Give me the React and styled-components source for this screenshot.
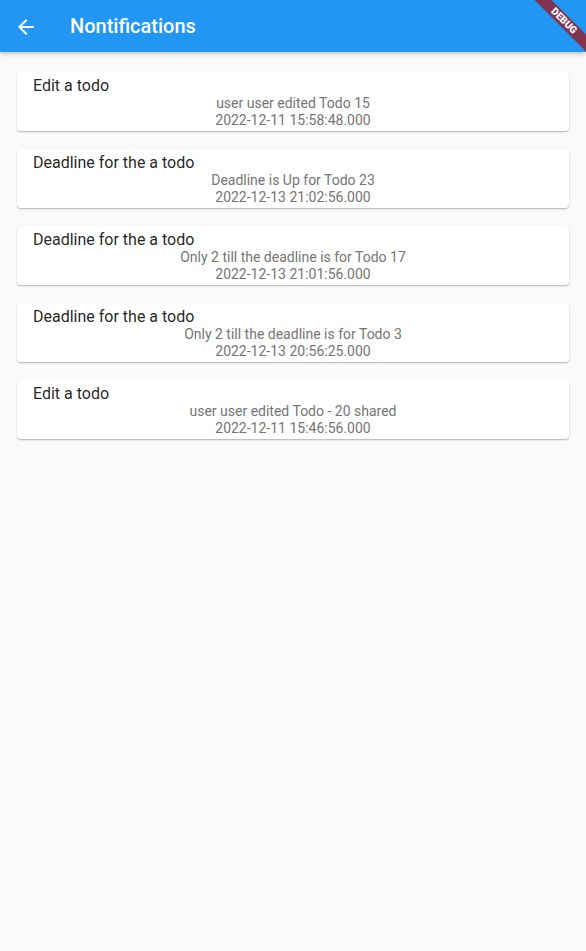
import React from 'react';
import styled, { createGlobalStyle } from 'styled-components';

const notifications = [
  { title: 'Edit a todo', body: 'user user edited Todo 15', date: '2022-12-11 15:58:48.000' },
  { title: 'Deadline for the a todo', body: 'Deadline is Up for Todo 23', date: '2022-12-13 21:02:56.000' },
  { title: 'Deadline for the a todo', body: 'Only 2 till the deadline is for Todo 17', date: '2022-12-13 21:01:56.000' },
  { title: 'Deadline for the a todo', body: 'Only 2 till the deadline is for Todo 3', date: '2022-12-13 20:56:25.000' },
  { title: 'Edit a todo', body: 'user user edited Todo - 20 shared', date: '2022-12-11 15:46:56.000' },
];

const GlobalStyle = createGlobalStyle`
  html, body {
    margin: 0;
    padding: 0;
    background: #fafafa;
    font-family: Roboto, "Liberation Sans", sans-serif;
  }
`;

const Screen = styled.div`
  position: relative;
  width: 586px;
  min-height: 951px;
  background: #fafafa;
  overflow: hidden;
`;

const AppBar = styled.header`
  height: 52px;
  background: #2196f3;
  display: flex;
  align-items: center;
  padding: 0 0 0 14px;
  box-shadow: 0 2px 4px rgba(0, 0, 0, 0.22);
  color: #fff;
`;

const BackButton = styled.div`
  width: 24px;
  height: 24px;
  display: flex;
  align-items: center;
  justify-content: center;
  margin-right: 32px;
  margin-top: 1px;
`;

const Title = styled.h1`
  margin: 0;
  font-size: 20px;
  font-weight: 500;
  letter-spacing: 0;
`;

const List = styled.main`
  display: flex;
  flex-direction: column;
  gap: 18px;
  padding: 20px 17px;
`;

const Card = styled.div`
  background: #fff;
  border-radius: 4px;
  box-shadow: 0 1px 2px rgba(0, 0, 0, 0.22), 0 1px 1px rgba(0, 0, 0, 0.08);
  padding: 4px 16px 2px;
  height: 53px;
`;

const CardTitle = styled.div`
  font-size: 16px;
  line-height: 19px;
  color: rgba(0, 0, 0, 0.87);
`;

const CardText = styled.div`
  font-size: 14px;
  line-height: 17px;
  color: #757575;
  text-align: center;
`;

const Ribbon = styled.div`
  position: absolute;
  top: 15px;
  right: -18px;
  width: 80px;
  height: 12px;
  background: #80344f;
  transform: rotate(45deg);
  color: #fff;
  font-size: 10px;
  font-weight: 900;
  line-height: 12px;
  text-align: center;
`;

export default function App() {
  return (
    <>
      <GlobalStyle />
      <Screen>
        <AppBar>
          <BackButton>
            <svg width="24" height="24" viewBox="0 0 24 24" fill="#fff">
              <path d="M20 11H7.83l5.59-5.59L12 4l-8 8 8 8 1.41-1.41L7.83 13H20v-2z" />
            </svg>
          </BackButton>
          <Title>Nontifications</Title>
        </AppBar>
        <Ribbon>DEBUG</Ribbon>
        <List>
          {notifications.map((n, i) => (
            <Card key={i}>
              <CardTitle>{n.title}</CardTitle>
              <CardText>{n.body}</CardText>
              <CardText>{n.date}</CardText>
            </Card>
          ))}
        </List>
      </Screen>
    </>
  );
}
